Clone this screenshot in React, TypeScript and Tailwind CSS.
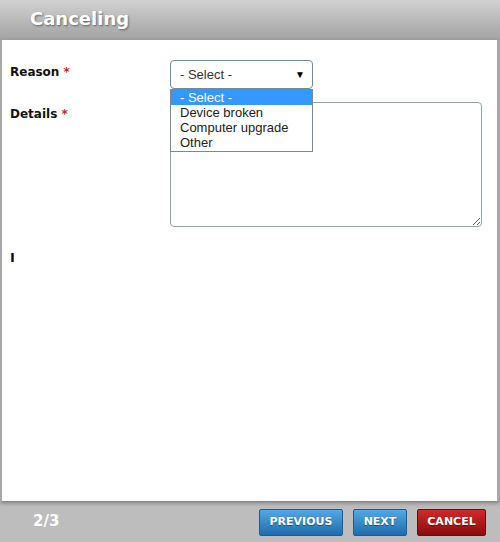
import React from 'react';

const options = ['- Select -', 'Device broken', 'Computer upgrade', 'Other'];

const App = () => {
  return (
    <div className="w-[500px] h-[542px] flex flex-col bg-[#bdbdbd] font-['DejaVu_Sans',sans-serif]">
      <div className="h-[40px] shrink-0 bg-gradient-to-b from-[#d2d2d2] to-[#a2a2a2] flex items-center pl-[30px]">
        <h1 className="text-[18px] font-bold text-white [text-shadow:1px_1px_2px_rgba(0,0,0,0.45)] -mt-[3px]">Canceling</h1>
      </div>

      <div className="h-[461px] shrink-0 bg-white border-l-2 border-r-[3px] border-[#a8a8a8] shadow-[0_2px_4px_rgba(0,0,0,0.35)] relative z-10 pt-[20px] pl-[8px]">
        <div className="flex">
          <label className="w-[160px] text-[12px] font-bold text-[#111] pt-[3px]">
            Reason <span className="text-[#d0222a]">*</span>
          </label>
          <div className="relative">
            <div className="w-[143px] h-[29px] border border-[#6f8a98] rounded-[4px] flex items-center justify-between pl-[9px] pr-[7px] font-['Liberation_Sans',sans-serif] text-[13px] text-[#333]">
              <span className="mt-[1px]">- Select -</span>
              <span className="text-[10px] text-black">▼</span>
            </div>
            <ul className="absolute left-0 top-[29px] w-[143px] bg-white border border-[#7a8a94] font-['Liberation_Sans',sans-serif] text-[13px] leading-[15px] text-[#222] z-20 pb-[1px]">
              {options.map((o, i) => (
                <li key={o} className={i === 0 ? 'bg-[#3399ff] text-white pl-[9px]' : 'pl-[9px]'}>{o}</li>
              ))}
            </ul>
          </div>
        </div>

        <div className="flex mt-[13px]">
          <label className="w-[160px] text-[12px] font-bold text-[#111] pt-[3px]">
            Details <span className="text-[#d0222a]">*</span>
          </label>
          <textarea className="w-[312px] h-[125px] border border-[#8fa5ae] rounded-[4px] resize-y outline-none" />
        </div>

        <div className="mt-[21px] text-[13px] font-bold text-[#111]">I</div>
      </div>

      <div className="flex-1 flex items-center justify-between pl-[33px] pr-[14px]">
        <span className="text-[15px] font-bold text-white">2/3</span>
        <div className="flex gap-[10px] mt-[2px]">
          <button className="w-[84px] h-[27px] rounded-[2px] border border-[#1c5d8f] bg-gradient-to-b from-[#52a9e3] to-[#1e6cac] text-white text-[11px] font-bold [text-shadow:0_1px_1px_rgba(0,0,0,0.4)]">PREVIOUS</button>
          <button className="w-[54px] h-[27px] rounded-[2px] border border-[#1c5d8f] bg-gradient-to-b from-[#52a9e3] to-[#1e6cac] text-white text-[11px] font-bold [text-shadow:0_1px_1px_rgba(0,0,0,0.4)]">NEXT</button>
          <button className="w-[69px] h-[27px] rounded-[2px] border border-[#6e0b0b] bg-gradient-to-b from-[#cf2a2a] to-[#8c0b0b] text-white text-[11px] font-bold [text-shadow:0_1px_1px_rgba(0,0,0,0.4)]">CANCEL</button>
        </div>
      </div>
    </div>
  );
};

export default App;
